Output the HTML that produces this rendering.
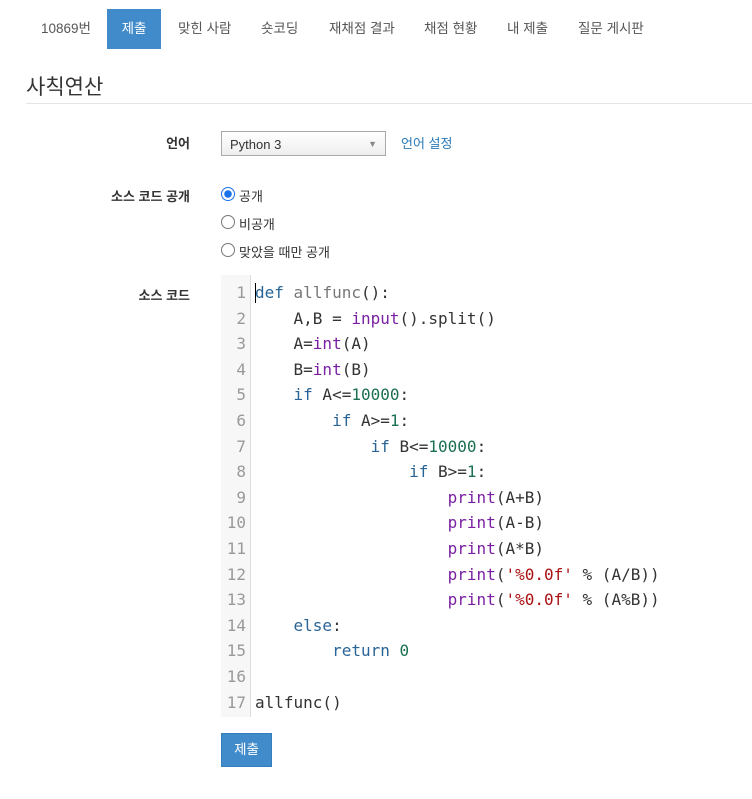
<!DOCTYPE html>
<html><head><meta charset="utf-8"><style>
body{margin:0;width:752px;height:799px;background:#fff;font-family:"Liberation Sans","Noto Sans CJK KR",sans-serif;color:#333;font-size:13px;position:relative;overflow:hidden}
.a{position:absolute;white-space:nowrap}
.tab{position:absolute;top:9px;height:40px;line-height:40px;font-size:13.5px;color:#555}
.act{background:#428bca;color:#fff;left:107px;width:54px;text-align:center}
.lbl{position:absolute;right:562px;font-weight:bold;font-size:13px;color:#333}
.radio{position:absolute;left:221px;width:12px;height:12px;border:1px solid #777;border-radius:50%;background:#fff}
.code{position:absolute;left:221px;top:275px;width:531px;height:442px}
.gut{position:absolute;left:0;top:0;width:29px;height:442px;background:#f7f7f7;border-right:1px solid #ddd}
.ln{position:absolute;font-family:"DejaVu Sans Mono",monospace;font-size:16px;color:#999;width:25px;text-align:right;left:0}
.cl{position:absolute;left:34px;font-family:"DejaVu Sans Mono",monospace;font-size:16px;white-space:pre;color:#333}
.k{color:#2a6496}.f{color:#777}.b{color:#7a1fa2}.n{color:#1a7050}.s{color:#a11}
</style></head><body>
<div class="tab" style="left:41px">10869번</div>
<div class="tab act">제출</div>
<div class="tab" style="left:178px">맞힌 사람</div>
<div class="tab" style="left:261px">숏코딩</div>
<div class="tab" style="left:329px">재채점 결과</div>
<div class="tab" style="left:424px">채점 현황</div>
<div class="tab" style="left:507px">내 제출</div>
<div class="tab" style="left:578px">질문 게시판</div>
<div class="a" style="left:26px;top:71px;font-size:21px;color:#333">사칙연산</div>
<div class="a" style="left:26px;top:103px;width:726px;height:1px;background:#e5e5e5"></div>

<div class="lbl" style="top:133px">언어</div>
<div class="a" style="left:221px;top:131px;width:163px;height:23px;border:1px solid #aaa;background:linear-gradient(#fff,#eee);font-size:13px;line-height:25px"><span style="padding-left:8px">Python 3</span><span style="position:absolute;right:8px;top:0;font-size:9px;color:#888">▼</span></div>
<div class="a" style="left:401px;top:133px;color:#2a7ab8;font-size:13px">언어 설정</div>

<div class="lbl" style="top:186px">소스 코드 공개</div>
<div class="radio" style="top:187px;border-color:#1a73e8;background:radial-gradient(circle,#1a73e8 3.5px,#fff 4px)"></div>
<div class="a" style="left:239px;top:186px">공개</div>
<div class="radio" style="top:215px"></div>
<div class="a" style="left:239px;top:214px">비공개</div>
<div class="radio" style="top:243px"></div>
<div class="a" style="left:239px;top:242px">맞았을 때만 공개</div>

<div class="lbl" style="top:285px">소스 코드</div>
<div class="code"><div class="gut"></div>
<div class="a" style="left:34px;top:8px;width:1px;height:20px;background:#000"></div>
<div class="ln" style="top:8px">1</div><div class="cl" style="top:8px"><span class="k">def</span> <span class="f">allfunc</span>():</div>
<div class="ln" style="top:34px">2</div><div class="cl" style="top:34px">    A,B = <span class="b">input</span>().split()</div>
<div class="ln" style="top:59px">3</div><div class="cl" style="top:59px">    A=<span class="b">int</span>(A)</div>
<div class="ln" style="top:85px">4</div><div class="cl" style="top:85px">    B=<span class="b">int</span>(B)</div>
<div class="ln" style="top:110px">5</div><div class="cl" style="top:110px">    <span class="k">if</span> A&lt;=<span class="n">10000</span>:</div>
<div class="ln" style="top:136px">6</div><div class="cl" style="top:136px">        <span class="k">if</span> A&gt;=<span class="n">1</span>:</div>
<div class="ln" style="top:162px">7</div><div class="cl" style="top:162px">            <span class="k">if</span> B&lt;=<span class="n">10000</span>:</div>
<div class="ln" style="top:187px">8</div><div class="cl" style="top:187px">                <span class="k">if</span> B&gt;=<span class="n">1</span>:</div>
<div class="ln" style="top:213px">9</div><div class="cl" style="top:213px">                    <span class="b">print</span>(A+B)</div>
<div class="ln" style="top:238px">10</div><div class="cl" style="top:238px">                    <span class="b">print</span>(A-B)</div>
<div class="ln" style="top:264px">11</div><div class="cl" style="top:264px">                    <span class="b">print</span>(A*B)</div>
<div class="ln" style="top:290px">12</div><div class="cl" style="top:290px">                    <span class="b">print</span>(<span class="s">'%0.0f'</span> % (A/B))</div>
<div class="ln" style="top:315px">13</div><div class="cl" style="top:315px">                    <span class="b">print</span>(<span class="s">'%0.0f'</span> % (A%B))</div>
<div class="ln" style="top:341px">14</div><div class="cl" style="top:341px">    <span class="k">else</span>:</div>
<div class="ln" style="top:366px">15</div><div class="cl" style="top:366px">        <span class="k">return</span> <span class="n">0</span></div>
<div class="ln" style="top:392px">16</div>
<div class="ln" style="top:418px">17</div><div class="cl" style="top:418px">allfunc()</div>
</div>
<div class="a" style="left:221px;top:733px;width:49px;height:32px;background:#428bca;border:1px solid #357ebd;color:#fff;text-align:center;line-height:32px;font-size:13.5px">제출</div>
</body></html>
